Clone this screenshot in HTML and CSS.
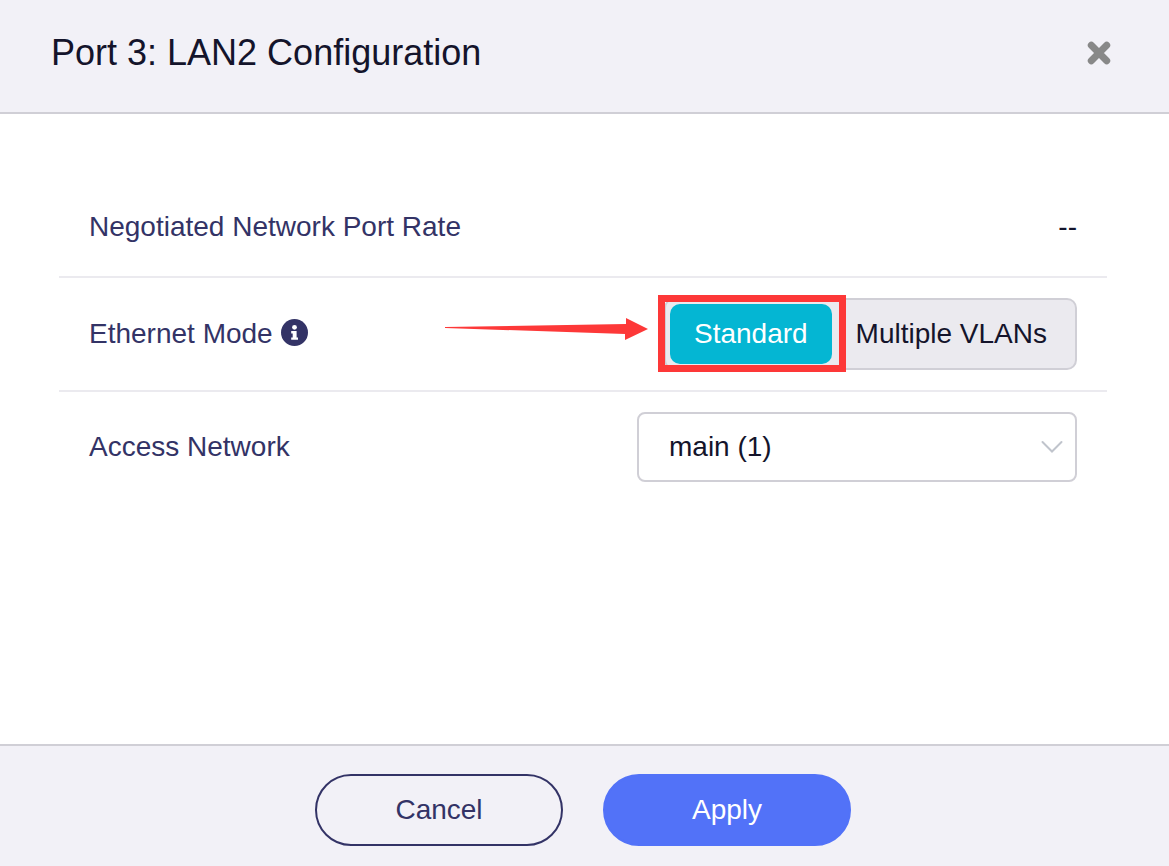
FILE: index.html
```html
<!DOCTYPE html>
<html lang="en">
<head>
<meta charset="UTF-8">
<meta name="viewport" content="width=device-width, initial-scale=1">
<title>Port 3: LAN2 Configuration</title>
<link rel="stylesheet" href="styles.css">
</head>
<body>
	<form class="dialog" role="dialog" aria-labelledby="dialog-title">
		<header class="dialog-header">
			<h1 class="dialog-title" id="dialog-title">Port 3: LAN2 Configuration</h1>
			<button type="button" class="close" aria-label="Close">
				<svg width="24" height="24" viewBox="0 0 24 24"><path d="M4.3 4.3L19.7 19.7M19.7 4.3L4.3 19.7"/></svg>
			</button>
		</header>

		<main class="dialog-body">
			<div class="row">
				<span class="row-label">Negotiated Network Port Rate</span>
				<span class="row-value">--</span>
			</div>
			<div class="row" role="radiogroup" aria-labelledby="mode-label">
				<span class="row-label">
					<span id="mode-label">Ethernet Mode</span>
					<svg class="info" width="28" height="30" viewBox="0 0 28 30">
						<circle cx="13.5" cy="13.5" r="13.5" fill="#333366"/>
						<circle cx="13.5" cy="8.3" r="2.4" fill="#fff"/>
						<path d="M10.2 12H15.6V18.4H17V20.8H10.2V18.4H11.7V14.4H10.2Z" fill="#fff"/>
					</svg>
				</span>
				<div class="switch">
					<div class="option">
						<input type="radio" name="mode" id="mode-standard" checked>
						<label for="mode-standard">Standard</label>
						<span class="mark-frame"></span>
						<svg class="mark-arrow" width="204" height="24" viewBox="0 0 204 24">
							<path d="M0 9L181 6V0L203 11L180 22V16L0 10Z" fill="#fd3838"/>
						</svg>
					</div>
					<div class="option">
						<input type="radio" name="mode" id="mode-vlans">
						<label for="mode-vlans">Multiple VLANs</label>
					</div>
				</div>
			</div>
			<div class="row">
				<label class="row-label" for="network">Access Network</label>
				<div class="select">
					<select id="network">
						<option>main (1)</option>
					</select>
					<svg class="chevron" width="22" height="14" viewBox="0 0 22 14"><path d="M1.5 2L11 11.5L20.5 2"/></svg>
				</div>
			</div>
		</main>

		<footer class="dialog-footer">
			<button type="button" class="btn btn-cancel">Cancel</button>
			<button type="submit" class="btn btn-apply">Apply</button>
		</footer>
	</form>
</body>
</html>
```

FILE: styles.css
```css
*{
	box-sizing: border-box;
}
body{
	margin: 0;
	font-family: "Liberation Sans", Arial, sans-serif;
	font-size: 28px;
	line-height: 32px;
	color: #14142b;
	background: #fff;
}
button, select{
	font: inherit;
	color: inherit;
}

.dialog{
	display: flex;
	flex-direction: column;
	min-height: 100vh;
}

/* header */
.dialog-header{
	display: flex;
	align-items: center;
	justify-content: space-between;
	padding: 33px 58px 39px 51px;
	background: #f2f1f7;
	border-bottom: 2px solid #d0cfd6;
}
.dialog-title{
	margin: 0;
	font-size: 36px;
	line-height: 40px;
	font-weight: normal;
}
.close{
	display: flex;
	padding: 0;
	border: 0;
	background: none;
	cursor: pointer;
}
.close path{
	fill: none;
	stroke: #888;
	stroke-width: 7;
	stroke-linecap: round;
}

/* rows */
.dialog-body{
	flex: 1;
	padding: 64px 62px 64px 59px;
}
.row{
	display: flex;
	align-items: center;
	justify-content: space-between;
	min-height: 100px;
	padding: 20px 30px;
	border-bottom: 2px solid #ebeaef;
}
.row:last-child{
	border-bottom: 0;
}
.row-label{
	display: flex;
	align-items: center;
	gap: 8px;
	color: #333366;
}

/* mode switch */
.switch{
	display: flex;
	padding: 4px;
	border: 2px solid #d0cfd6;
	border-radius: 10px;
	background: #ebeaef;
}
.option{
	position: relative;
}
.option input{
	position: absolute;
	opacity: 0;
}
.option label{
	display: block;
	padding: 14px 24px;
	border-radius: 10px;
	cursor: pointer;
}
.option input:checked + label{
	color: #fff;
	background: #04b6d3;
}

/* callout over the selected option */
.mark-frame{
	position: absolute;
	top: -9px;
	right: -14px;
	bottom: -8px;
	left: -12px;
	border: 7px solid #fd3838;
	pointer-events: none;
}
.mark-arrow{
	position: absolute;
	top: 14px;
	right: 183px;
	pointer-events: none;
}

/* select */
.select{
	position: relative;
	flex: 0 1 440px;
}
.select select{
	display: block;
	width: 100%;
	height: 70px;
	padding: 0 60px 0 30px;
	border: 2px solid #d0cfd6;
	border-radius: 8px;
	background: #fff;
	appearance: none;
}
.chevron{
	position: absolute;
	top: 28px;
	right: 14px;
	pointer-events: none;
}
.chevron path{
	fill: none;
	stroke: #c0c4cc;
	stroke-width: 2;
	stroke-linecap: round;
}

/* footer */
.dialog-footer{
	display: flex;
	justify-content: center;
	gap: 40px;
	padding: 28px 62px 20px 59px;
	background: #f2f1f7;
	border-top: 2px solid #d0cfd6;
}
.btn{
	width: 248px;
	height: 72px;
	border: 2px solid #333366;
	border-radius: 36px;
	background: none;
	color: #333366;
	cursor: pointer;
}
.btn-apply{
	border-color: #5272f8;
	background: #5272f8;
	color: #fff;
}
```
